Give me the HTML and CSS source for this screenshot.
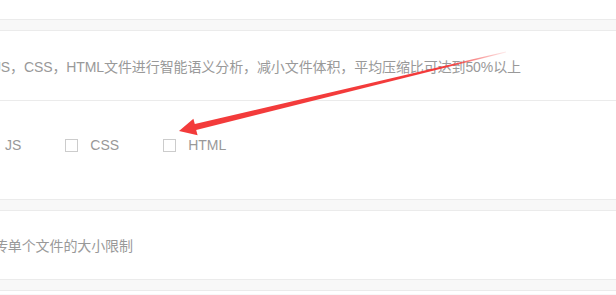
FILE: index.html
```html
<!DOCTYPE html>
<html lang="zh-CN">
<head>
  <meta charset="UTF-8">
  <meta name="viewport" content="width=device-width, initial-scale=1.0">
  <title>压缩设置</title>
  <link rel="stylesheet" href="styles.css">
</head>
<body>
  <div class="panel panel-top"></div>

  <div class="panel">
    <div class="row row-desc">
      <p class="desc">对JS，CSS，HTML文件进行智能语义分析，减小文件体积，平均压缩比可达到50%以上</p>
    </div>
    <div class="row row-options">
      <label class="check"><span class="box"></span>JS</label>
      <label class="check"><span class="box"></span>CSS</label>
      <label class="check"><span class="box"></span>HTML</label>
    </div>
  </div>

  <div class="panel">
    <div class="row row-desc row-limit">
      <p class="desc">上传单个文件的大小限制</p>
    </div>
  </div>

  <div class="panel panel-bottom"></div>

  <svg class="arrow" width="616" height="295" viewBox="0 0 616 295">
    <defs>
      <linearGradient id="fade" gradientUnits="userSpaceOnUse" x1="179" y1="131" x2="506" y2="52">
        <stop offset="0" stop-color="#f33b3b"/>
        <stop offset="0.82" stop-color="#f33b3b"/>
        <stop offset="1" stop-color="#f33b3b" stop-opacity="0.1"/>
      </linearGradient>
    </defs>
    <polygon fill="url(#fade)" points="179,131 197.6,135.2 196.2,129.9 506,52.4 506,51.6 194.8,124.1 193.4,118.8"/>
  </svg>
</body>
</html>
```

FILE: styles.css
```css
body {
  margin: 0;
  height: 295px;
  background-color: #f8f8f8;
  font-family: "Liberation Sans", "Noto Sans CJK SC", sans-serif;
  font-size: 14px;
  color: #999;
  overflow: hidden;
  position: relative;
}
.panel {
  background-color: #fff;
  border-top: 1px solid #ebebeb;
  border-bottom: 1px solid #ebebeb;
  margin-bottom: 10px;
}
.panel-top {
  border-top: none;
  height: 19px;
}
.panel-bottom {
  height: 3px;
  border-bottom: none;
  margin-bottom: 0;
}
.row {
  margin-left: -20px;
}
.row-desc {
  height: 70px;
  display: flex;
  align-items: center;
  padding-top: 2px;
  box-sizing: border-box;
  border-bottom: 1px solid #ebebeb;
}
.row-limit {
  height: 68px;
  padding-top: 1px;
  border-bottom: none;
}
.desc {
  margin: 0;
  line-height: 20px;
  white-space: nowrap;
  letter-spacing: -0.1px;
}
.row-options {
  height: 98px;
  display: flex;
  align-items: flex-start;
  padding-top: 34px;
  box-sizing: border-box;
}
.check {
  display: flex;
  align-items: center;
  line-height: 20px;
  margin-right: 44px;
}
.box {
  width: 11px;
  height: 11px;
  border: 1px solid #ccc;
  background-color: #fff;
  margin-right: 12px;
}
.arrow {
  position: absolute;
  top: 0;
  left: 0;
  pointer-events: none;
}
```
